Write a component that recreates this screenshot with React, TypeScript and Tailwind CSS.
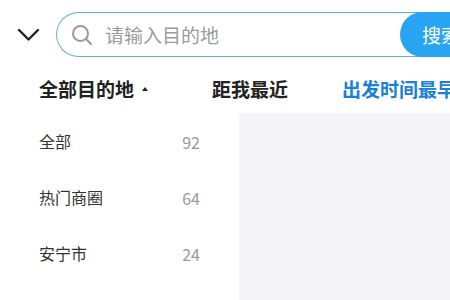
import React from "react";

const rows = [
  { name: "全部", n: 92 },
  { name: "热门商圈", n: 64 },
  { name: "安宁市", n: 24 },
  { name: "昆明市", n: 12 },
];

export default function App() {
  return (
    <div
      className="w-[450px] h-[300px] overflow-hidden bg-white text-[#222]"
      style={{ fontFamily: '"Noto Sans CJK SC", "Noto Sans", sans-serif' }}
    >
      {/* header */}
      <div className="flex items-start h-[70px] pt-[12px]">
        <div className="w-[56px] h-[45px] shrink-0 flex items-center pl-[17px]">
          <svg width="23" height="14" viewBox="0 0 23 14" fill="none">
            <polyline points="2,2 11.5,11.5 21,2" stroke="#1f1f1f" strokeWidth="2.4" strokeLinecap="round" strokeLinejoin="round" />
          </svg>
        </div>
        <div className="flex shrink-0 w-[440px] h-[45px]">
          <div className="flex-1 flex items-center border border-r-0 border-[#5cb6c9] rounded-l-full pl-[14px]">
            <svg width="22" height="22" viewBox="0 0 22 22" fill="none">
              <circle cx="9.5" cy="9.5" r="7.5" stroke="#9a9a9a" strokeWidth="2" />
              <line x1="15" y1="15" x2="20" y2="20" stroke="#9a9a9a" strokeWidth="2.2" strokeLinecap="round" />
            </svg>
            <span className="ml-[12px] text-[19px] text-[#9b9b9b] leading-none">请输入目的地</span>
          </div>
          <div className="-ml-[24px] w-[96px] h-[45px] rounded-full bg-[#27a4f2] flex items-center pl-[22px] text-white text-[19px] leading-none z-10">
            搜索
          </div>
        </div>
      </div>

      {/* tabs */}
      <div className="flex items-center h-[37px] pl-[39px] text-[19px] font-bold leading-none whitespace-nowrap">
        <div className="w-[173px] shrink-0 flex items-center">
          <span>全部目的地</span>
          <svg className="ml-[8px]" width="6" height="4" viewBox="0 0 6 4">
            <polygon points="3,0 6,4 0,4" fill="#222" />
          </svg>
        </div>
        <div className="w-[130px] shrink-0">距我最近</div>
        <div className="shrink-0 text-[#1b80d8]">出发时间最早</div>
      </div>

      {/* body */}
      <div className="flex items-start h-[200px]">
        <div className="w-[239px] shrink-0 pl-[39px] pr-[39px] pt-[6px]">
          {rows.map((r) => (
            <div key={r.name} className="h-[56px] flex items-center justify-between leading-none">
              <span className="text-[16px] text-[#333]">{r.name}</span>
              <span className="text-[16px] text-[#999] pt-[1px]">{r.n}</span>
            </div>
          ))}
        </div>
        <div className="flex-1 self-stretch mt-[6px] bg-[#f5f4f8]" />
      </div>
    </div>
  );
}
